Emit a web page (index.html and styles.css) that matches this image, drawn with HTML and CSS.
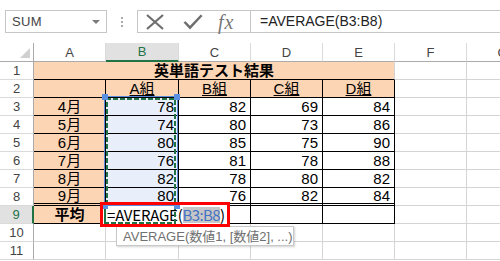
FILE: index.html
```html
<!DOCTYPE html>
<html lang="ja">
<head>
<meta charset="utf-8">
<link rel="stylesheet" href="styles.css">
</head>
<body>
<div class="page">
  <div class="toolbar">
    <div class="namebox"><span class="nb-text">SUM</span><span class="arrow"></span></div>
    <div class="dots"><i></i><i></i><i></i></div>
    <div class="fbar">
      <div class="fbtns">
        <svg class="ico-x" width="18" height="16" viewBox="0 0 18 16"><path d="M1 1 L17 15 M17 1 L1 15" stroke="#6e6e6e" stroke-width="2.2" fill="none"/></svg>
        <svg class="ico-ok" width="20" height="16" viewBox="0 0 20 16"><path d="M0.5 8.5 L2.5 7.2 L7 11.8 L17.8 0.5 L19.5 2 L7 15.5 Z" fill="#6e6e6e"/></svg>
        <span class="fx">fx</span>
      </div>
      <div class="ftext">=AVERAGE(B3:B8)</div>
    </div>
  </div>

  <div class="sheet">
    <div class="c corner"><svg width="10" height="10" viewBox="0 0 10 10"><polygon points="10,0 10,10 0,10" fill="#d0d0d0"/></svg></div>
    <div class="c ch">A</div>
    <div class="c ch sel">B</div>
    <div class="c ch">C</div>
    <div class="c ch">D</div>
    <div class="c ch">E</div>
    <div class="c ch">F</div>
    <div class="c ch">G</div>

    <div class="c rh">1</div>
    <div class="c pe title">英単語テスト結果</div>
    <div class="c"></div><div class="c"></div>

    <div class="c rh">2</div>
    <div class="c pe bk"></div>
    <div class="c pe bk ctr"><u>A組</u></div>
    <div class="c pe bk ctr"><u>B組</u></div>
    <div class="c pe bk ctr"><u>C組</u></div>
    <div class="c pe bk ctr"><u>D組</u></div>
    <div class="c"></div><div class="c"></div>

    <div class="c rh">3</div>
    <div class="c pe bk ctr">4月</div>
    <div class="c bk num hl">78</div>
    <div class="c bk num">82</div>
    <div class="c bk num">69</div>
    <div class="c bk num">84</div>
    <div class="c"></div><div class="c"></div>

    <div class="c rh">4</div>
    <div class="c pe bk ctr">5月</div>
    <div class="c bk num hl">74</div>
    <div class="c bk num">80</div>
    <div class="c bk num">73</div>
    <div class="c bk num">86</div>
    <div class="c"></div><div class="c"></div>

    <div class="c rh">5</div>
    <div class="c pe bk ctr">6月</div>
    <div class="c bk num hl">80</div>
    <div class="c bk num">85</div>
    <div class="c bk num">75</div>
    <div class="c bk num">90</div>
    <div class="c"></div><div class="c"></div>

    <div class="c rh">6</div>
    <div class="c pe bk ctr">7月</div>
    <div class="c bk num hl">76</div>
    <div class="c bk num">81</div>
    <div class="c bk num">78</div>
    <div class="c bk num">88</div>
    <div class="c"></div><div class="c"></div>

    <div class="c rh">7</div>
    <div class="c pe bk ctr">8月</div>
    <div class="c bk num hl">82</div>
    <div class="c bk num">78</div>
    <div class="c bk num">80</div>
    <div class="c bk num">82</div>
    <div class="c"></div><div class="c"></div>

    <div class="c rh">8</div>
    <div class="c pe bk dbl ctr">9月</div>
    <div class="c bk dbl num hl">80</div>
    <div class="c bk dbl num">76</div>
    <div class="c bk dbl num">82</div>
    <div class="c bk dbl num">84</div>
    <div class="c"></div><div class="c"></div>

    <div class="c rh rsel">9</div>
    <div class="c pe bk ctr bold">平均</div>
    <div class="c bk"></div>
    <div class="c bk"></div>
    <div class="c bk"></div>
    <div class="c bk"></div>
    <div class="c"></div><div class="c"></div>

    <div class="c rh">10</div>
    <div class="c"></div><div class="c"></div><div class="c"></div><div class="c"></div><div class="c"></div><div class="c"></div><div class="c"></div>

    <div class="c rh">11</div>
    <div class="c"></div><div class="c"></div><div class="c"></div><div class="c"></div><div class="c"></div><div class="c"></div><div class="c"></div>
  </div>

  <div class="editor">=AVERAGE(<span class="ref">B3:B8</span>)</div>

  <svg class="marks" width="500" height="261" viewBox="0 0 500 261">
    <rect x="104.5" y="96.5" width="73" height="109" fill="none" stroke="#5a8ad8" stroke-width="1"/>
    <path d="M107 205 L107 99 L175 99 L175 223 L104 223" fill="none" stroke="#217346" stroke-width="2" stroke-dasharray="5 2"/>
    <path d="M105 205 L105 224" stroke="#217346" stroke-width="2"/>
    <rect x="102" y="94" width="6" height="6" fill="#5b8fe0"/>
    <rect x="174" y="94" width="6" height="6" fill="#5b8fe0"/>
    <rect x="102" y="203" width="6" height="6" fill="#5b8fe0"/>
    <rect x="174" y="203" width="6" height="6" fill="#5b8fe0"/>
  </svg>

  <div class="tip">AVERAGE(数値1, [数値2], ...)</div>
  <div class="redbox"></div>
</div>
</body>
</html>
```
FILE: styles.css
```css
html, body {
  margin: 0;
  padding: 0;
  background: #fff;
}
.page {
  position: relative;
  width: 500px;
  height: 261px;
  overflow: hidden;
  background: #fff;
  font-family: "Liberation Sans", "Noto Sans CJK JP", sans-serif;
}
.toolbar {
  height: 43px;
  box-sizing: border-box;
  padding: 10px 0 0 5px;
  display: flex;
  align-items: flex-start;
}
.namebox {
  width: 102px;
  height: 23px;
  box-sizing: border-box;
  border: 1px solid #c6c6c6;
  display: flex;
  align-items: center;
  justify-content: space-between;
  padding: 0 6px 0 6px;
}
.nb-text {
  font: 13px "Liberation Sans", sans-serif;
  color: #444;
  letter-spacing: 0.3px;
}
.arrow {
  width: 0;
  height: 0;
  border-left: 4px solid transparent;
  border-right: 4px solid transparent;
  border-top: 4px solid #7a7a7a;
}
.dots {
  width: 30px;
  height: 23px;
  display: flex;
  flex-direction: column;
  align-items: center;
  justify-content: center;
  gap: 2px;
}
.dots i {
  display: block;
  width: 2px;
  height: 2px;
  background: #a8a8a8;
}
.fbar {
  flex: 1;
  height: 23px;
  box-sizing: border-box;
  border: 1px solid #c6c6c6;
  border-right: none;
  display: flex;
}
.fbtns {
  width: 113px;
  box-sizing: border-box;
  border-right: 1px solid #c6c6c6;
  display: flex;
  align-items: center;
}
.ico-x { margin-left: 8px; }
.ico-ok { margin-left: 19px; }
.fx {
  margin-left: 15px;
  font: italic 20px "Liberation Serif", serif;
  color: #777;
  line-height: 20px;
  letter-spacing: 1px;
}
.ftext {
  padding-left: 9px;
  font: 14px "Liberation Sans", sans-serif;
  color: #222;
  line-height: 21px;
  white-space: nowrap;
}

.sheet {
  display: grid;
  grid-template-columns: 34px 72px 73px 72px 72px 72px 72px 72px;
  grid-template-rows: 19px repeat(11, 18px);
}
.c {
  box-sizing: border-box;
  border-right: 1px solid #d4d4d4;
  border-bottom: 1px solid #d4d4d4;
  display: flex;
  align-items: center;
  white-space: nowrap;
  font-size: 15px;
  line-height: 16px;
  color: #000;
}
.corner {
  justify-content: flex-end;
  align-items: flex-end;
  padding: 0 3px 3px 0;
  border-right-color: #ababab;
  border-bottom-color: #ababab;
}
.ch {
  justify-content: center;
  font: 13px "Liberation Sans", sans-serif;
  color: #444;
  border-right-color: #dadada;
  border-bottom-color: #ababab;
}
.ch.sel {
  background: #e1e1e1;
  color: #217346;
  border-bottom: 2px solid #217346;
}
.rh {
  justify-content: center;
  font: 13px "Liberation Sans", sans-serif;
  color: #444;
  border-right-color: #ababab;
  border-bottom-color: #dadada;
}
.rh.rsel {
  background: #e1e1e1;
  color: #217346;
  border-right: 2px solid #217346;
}
.pe { background: #fcd5b4; }
.bk {
  border-right-color: #000;
  border-bottom-color: #000;
}
.dbl { border-bottom: 3px double #000; }
.ctr { justify-content: center; }
.num {
  justify-content: flex-end;
  padding-right: 4px;
}
.hl { background: #e9effa; }
.bold { font-weight: bold; }
.title {
  grid-column: span 5;
  justify-content: center;
  font-weight: bold;
  border-right-color: #d4d4d4;
  border-bottom-color: #000;
}
u {
  text-underline-offset: 1px;
}

.editor {
  position: absolute;
  left: 103px;
  top: 205px;
  width: 124px;
  height: 19px;
  box-sizing: border-box;
  padding-left: 4px;
  background: #fff;
  display: flex;
  align-items: center;
  font-family: "Noto Sans CJK JP", "Liberation Sans", sans-serif;
  font-size: 15px;
  line-height: 16px;
  white-space: nowrap;
  color: #000;
  letter-spacing: -0.2px;
}
.ref {
  background: #c6c6c6;
  color: #4472c4;
  letter-spacing: -0.6px;
}
.marks {
  position: absolute;
  left: 0;
  top: 0;
}
.tip {
  position: absolute;
  left: 116px;
  top: 226px;
  width: 178px;
  height: 20px;
  box-sizing: border-box;
  border: 1px solid #c8c8c8;
  background: #fff;
  box-shadow: 1px 1px 2px rgba(0, 0, 0, 0.18);
  padding-left: 6px;
  display: flex;
  align-items: center;
  font-size: 13px;
  line-height: 15px;
  color: #707070;
  white-space: nowrap;
}
.redbox {
  position: absolute;
  left: 100px;
  top: 202px;
  width: 130px;
  height: 25px;
  box-sizing: border-box;
  border: 3px solid #ff0000;
}
```
